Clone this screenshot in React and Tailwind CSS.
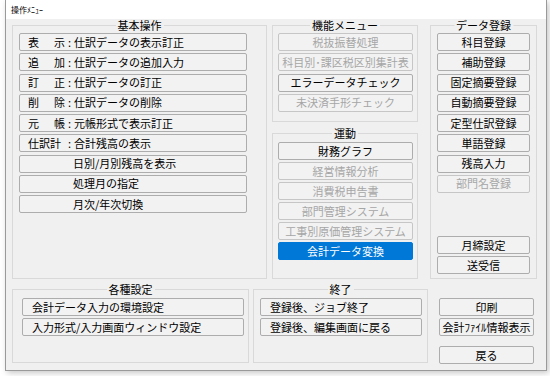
const FONT = "font-['Noto_Sans_CJK_JP','Noto_Sans_CJK_SC',sans-serif]";

function Btn({ children, disabled, primary, className = "" }) {
  const tone = primary
    ? "bg-[#0078d7] border-[#0078d7] text-white"
    : disabled
    ? "bg-[#f2f2f2] border-[#c6c6c6] text-[#a6a6a6]"
    : "bg-[#f2f2f2] border-[#adadad] text-black";
  return (
    <button
      type="button"
      className={`h-[18px] shrink-0 border rounded-[2px] flex items-center text-[11px] leading-none whitespace-nowrap ${tone} ${className}`}
    >
      {children}
    </button>
  );
}

function Group({ title, className = "", children }) {
  return (
    <div className={`relative border border-[#d9d9d9] ${className}`}>
      <span className="absolute left-1/2 -translate-x-1/2 -top-[7px] bg-[#f0f0f0] px-[2px] text-[11px] leading-[12px] whitespace-nowrap">
        {title}
      </span>
      {children}
    </div>
  );
}

const basic = [
  ["表", "示", "仕訳データの表示訂正"],
  ["追", "加", "仕訳データの追加入力"],
  ["訂", "正", "仕訳データの訂正"],
  ["削", "除", "仕訳データの削除"],
  ["元", "帳", "元帳形式で表示訂正"],
];

const sub = ["日別/月別残高を表示", "処理月の指定", "月次/年次切換"];

const kinou = [
  ["税抜振替処理", true],
  ["科目別･課区税区別集計表", true],
  ["エラーデータチェック", false],
  ["未決済手形チェック", true],
];

const rendou = [
  ["財務グラフ", false],
  ["経営情報分析", true],
  ["消費税申告書", true],
  ["部門管理システム", true],
  ["工事別原価管理システム", true],
];

const touroku = [
  ["科目登録", false],
  ["補助登録", false],
  ["固定摘要登録", false],
  ["自動摘要登録", false],
  ["定型仕訳登録", false],
  ["単語登録", false],
  ["残高入力", false],
  ["部門名登録", true],
];

export default function App() {
  return (
    <div className={`w-[550px] h-[376px] bg-white text-black ${FONT}`}>
      <div className="ml-[5px] w-[542px] border-x border-b border-[#9a9a9a] bg-[#f0f0f0] shadow-[2px_2px_6px_rgba(0,0,0,0.22)]">
        <div className="h-[19px] bg-white flex items-center pl-[5px] text-[8px] leading-none">操作ﾒﾆｭｰ</div>

        <div className="pt-[6px] pl-[6px] pb-[7px]">
          <div className="flex h-[254px]">
            <Group title="基本操作" className="w-[255px] pt-[7px] pl-[6px]">
              <div className="w-[228px] flex flex-col gap-[2.25px]">
                {basic.map(([a, b, text]) => (
                  <Btn key={text} className="pl-[8px]">
                    <span className="w-[37px] flex justify-between">
                      <span>{a}</span>
                      <span>{b}</span>
                    </span>
                    <span className="w-[9px] text-center">:</span>
                    <span>{text}</span>
                  </Btn>
                ))}
                <Btn className="pl-[8px]">
                  <span className="w-[37px] flex">仕訳計</span>
                  <span className="w-[9px] text-center">:</span>
                  <span>合計残高の表示</span>
                </Btn>
                {sub.map((text) => (
                  <Btn key={text} className="pl-[53px]">
                    {text}
                  </Btn>
                ))}
              </div>
            </Group>

            <div className="ml-[5px] w-[146px] flex flex-col">
              <Group title="機能メニュー" className="h-[97px] pt-[7px] pl-[5px]">
                <div className="w-[135px] flex flex-col gap-[2.25px]">
                  {kinou.map(([text, dis]) => (
                    <Btn key={text} disabled={dis} className="justify-center">
                      {text}
                    </Btn>
                  ))}
                </div>
              </Group>
              <Group title="運動" className="mt-[11px] flex-1 pt-[8px] pl-[5px]">
                <div className="w-[135px] flex flex-col gap-[2px]">
                  {rendou.map(([text, dis]) => (
                    <Btn key={text} disabled={dis} className="justify-center">
                      {text}
                    </Btn>
                  ))}
                  <Btn primary className="justify-center">
                    会計データ変換
                  </Btn>
                </div>
              </Group>
            </div>

            <Group title="データ登録" className="ml-[12px] w-[107px] pt-[7px] pl-[6px] pb-[4px] flex flex-col">
              <div className="w-[93px] flex flex-col gap-[2.25px]">
                {touroku.map(([text, dis]) => (
                  <Btn key={text} disabled={dis} className="justify-center">
                    {text}
                  </Btn>
                ))}
              </div>
              <div className="mt-auto w-[93px] flex flex-col gap-[2px]">
                <Btn className="justify-center">月締設定</Btn>
                <Btn className="justify-center">送受信</Btn>
              </div>
            </Group>
          </div>

          <div className="mt-[10px] flex h-[74px]">
            <Group title="各種設定" className="w-[237px] pt-[8px] pl-[9px]">
              <div className="w-[222px] flex flex-col gap-[2px]">
                <Btn className="pl-[9px]">会計データ入力の環境設定</Btn>
                <Btn className="pl-[9px]">入力形式/入力画面ウィンドウ設定</Btn>
              </div>
            </Group>
            <Group title="終了" className="ml-[4px] w-[175px] pt-[8px] pl-[6px]">
              <div className="w-[162px] flex flex-col gap-[2px]">
                <Btn className="pl-[9px]">登録後、ジョブ終了</Btn>
                <Btn className="pl-[9px]">登録後、編集画面に戻る</Btn>
              </div>
            </Group>
            <div className="ml-[11px] w-[95px] pt-[9px] flex flex-col">
              <Btn className="justify-center">印刷</Btn>
              <Btn className="justify-center mt-[2px]">会計ﾌｧｲﾙ情報表示</Btn>
              <Btn className="justify-center mt-[10px]">戻る</Btn>
            </div>
          </div>
        </div>
      </div>
    </div>
  );
}
